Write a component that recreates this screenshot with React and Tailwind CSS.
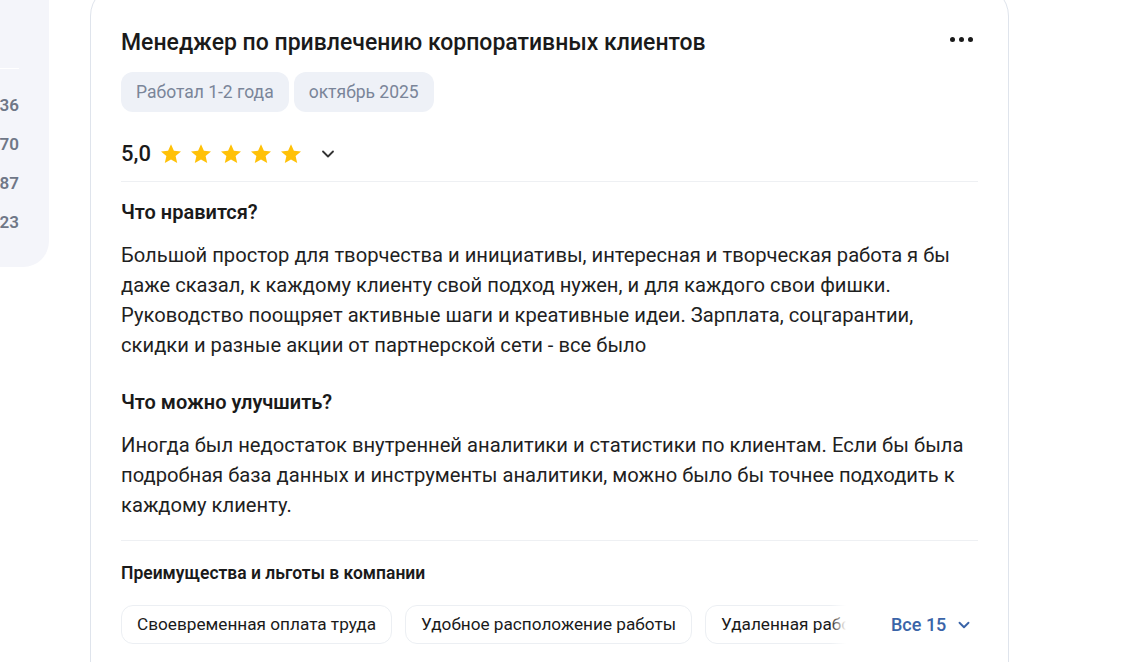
import { ChevronDown } from "lucide-react";

const STATS = ["36", "70", "87", "23"];
const PERKS = ["Своевременная оплата труда", "Удобное расположение работы", "Удаленная работа"];

function Star() {
  return (
    <svg width="24" height="24" viewBox="0 0 24 24" aria-hidden="true">
      <path
        d="M12 2.2l2.9 6.6 7.1.6-5.4 4.7 1.6 7-6.2-3.7-6.2 3.7 1.6-7L2 9.4l7.1-.6z"
        fill="#ffc107"
      />
    </svg>
  );
}

export default function App() {
  return (
    <div
      className="relative h-[662px] w-[1129px] overflow-hidden bg-white text-[#1a1a1a]"
      style={{ fontFamily: "Roboto, 'Noto Sans', sans-serif" }}
    >
      <div className="flex items-start gap-[41px]">
        {/* side stats panel */}
        <div className="mt-[-40px] h-[307px] w-[49px] shrink-0 rounded-br-[26px] bg-[#f4f5fa] pt-[108px]">
          <div className="h-px w-[19px] bg-white" />
          <div className="mt-[25px] flex w-[19px] flex-col items-end gap-[17px] overflow-visible">
            {STATS.map((n) => (
              <div key={n} className="h-[22px] whitespace-nowrap text-[17px] font-semibold leading-[22px] text-[#6f7787]">
                {n}
              </div>
            ))}
          </div>
        </div>

        {/* review card */}
        <div className="mt-[-16px] h-[720px] w-[919px] shrink-0 rounded-[32px] border border-[#dfe4ec] bg-white px-[30px] pt-[41px]">
          <div className="flex items-start justify-between">
            <h2 className="text-[23px] font-medium leading-[34px] text-[#1a1a1a]">
              Менеджер по привлечению корпоративных клиентов
            </h2>
            <div className="mr-[5px] mt-[11px] flex gap-[4px]">
              <span className="h-[5px] w-[5px] rounded-full bg-[#1a1a1a]" />
              <span className="h-[5px] w-[5px] rounded-full bg-[#1a1a1a]" />
              <span className="h-[5px] w-[5px] rounded-full bg-[#1a1a1a]" />
            </div>
          </div>

          <div className="mt-[12px] flex gap-[5px]">
            <span className="flex h-[40px] items-center rounded-[12px] bg-[#eef1f7] px-[15px] text-[17.5px] text-[#7a8599]">
              Работал 1-2 года
            </span>
            <span className="flex h-[40px] items-center rounded-[12px] bg-[#eef1f7] px-[15px] text-[17.5px] text-[#7a8599]">
              октябрь 2025
            </span>
          </div>

          <div className="mt-[28px] flex h-[28px] items-center">
            <span className="text-[22px] font-medium leading-[28px]">5,0</span>
            <div className="ml-[8px] flex gap-[6px]">
              <Star />
              <Star />
              <Star />
              <Star />
              <Star />
            </div>
            <ChevronDown className="ml-[15px] h-[20px] w-[20px] text-[#333]" strokeWidth={2.2} />
          </div>

          <div className="mt-[13px] h-px bg-[#eef0f3]" />

          <h3 className="mt-[18px] text-[20px] font-semibold leading-[24px]">Что нравится?</h3>
          <p className="mt-[16px] text-[20.2px] leading-[30px] text-[#1f1f1f]">
            Большой простор для творчества и инициативы, интересная и творческая работа я бы
            <br />
            даже сказал, к каждому клиенту свой подход нужен, и для каждого свои фишки.
            <br />
            Руководство поощряет активные шаги и креативные идеи. Зарплата, соцгарантии,
            <br />
            скидки и разные акции от партнерской сети - все было
          </p>

          <h3 className="mt-[30px] text-[20px] font-semibold leading-[24px]">Что можно улучшить?</h3>
          <p className="mt-[16px] text-[20.2px] leading-[30px] text-[#1f1f1f]">
            Иногда был недостаток внутренней аналитики и статистики по клиентам. Если бы была
            <br />
            подробная база данных и инструменты аналитики, можно было бы точнее подходить к
            <br />
            каждому клиенту.
          </p>

          <div className="mt-[20px] h-px bg-[#eef0f3]" />

          <h4 className="mt-[20px] text-[17.5px] font-semibold leading-[24px]">
            Преимущества и льготы в компании
          </h4>

          <div className="mt-[20px] flex items-center">
            <div className="relative flex w-[725px] shrink-0 gap-[13px] overflow-hidden">
              {PERKS.map((p) => (
                <span
                  key={p}
                  className="flex h-[39px] shrink-0 items-center whitespace-nowrap rounded-[12px] border border-[#eceff3] px-[15px] text-[17.2px] text-[#1a1a1a]"
                >
                  {p}
                </span>
              ))}
              <div className="absolute right-0 top-0 h-full w-[16px] bg-gradient-to-r from-white/0 to-white" />
            </div>
            <button className="ml-[45px] flex items-center gap-[9px] text-[18px] font-medium text-[#3a64a8]">
              Все 15
              <ChevronDown className="h-[18px] w-[18px]" strokeWidth={2.5} />
            </button>
          </div>
        </div>
      </div>
    </div>
  );
}
